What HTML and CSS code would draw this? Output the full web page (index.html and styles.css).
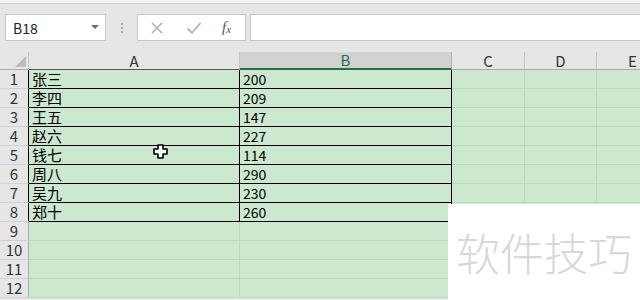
FILE: index.html
```html
<!DOCTYPE html>
<html>
<head>
<meta charset="utf-8">
<link rel="stylesheet" href="styles.css">
</head>
<body>
<div class="app">
  <div class="top"></div>
  <div class="toolbar">
    <div class="namebox"><span class="nb-text">B18</span><span class="nb-arrow"></span></div>
    <div class="sep"><i></i><i></i><i></i></div>
    <div class="fbtns">
      <svg class="ic" width="14" height="14" viewBox="0 0 14 14"><path d="M2 2 L12 12 M12 2 L2 12" stroke="#b3b3b3" stroke-width="1.6" fill="none"/></svg>
      <svg class="ic" width="16" height="14" viewBox="0 0 16 14"><path d="M1.5 7.5 L6 12 L14.5 2" stroke="#b3b3b3" stroke-width="1.8" fill="none"/></svg>
      <span class="fx">f<sub>x</sub></span>
    </div>
    <div class="finput"></div>
  </div>
  <div class="sheet">
    <div class="c corner"><span class="tri"></span></div>
    <div class="c ch cha">A</div>
    <div class="c ch chb">B</div>
    <div class="c ch">C</div>
    <div class="c ch">D</div>
    <div class="c ch">E</div>

    <div class="c rh rhb">1</div><div class="c tb ta">张三</div><div class="c tb">200</div><div class="c g"></div><div class="c g"></div><div class="c g"></div>
    <div class="c rh rhb">2</div><div class="c tb ta">李四</div><div class="c tb">209</div><div class="c g"></div><div class="c g"></div><div class="c g"></div>
    <div class="c rh rhb">3</div><div class="c tb ta">王五</div><div class="c tb">147</div><div class="c g"></div><div class="c g"></div><div class="c g"></div>
    <div class="c rh rhb">4</div><div class="c tb ta">赵六</div><div class="c tb">227</div><div class="c g"></div><div class="c g"></div><div class="c g"></div>
    <div class="c rh rhb">5</div><div class="c tb ta">钱七</div><div class="c tb">114</div><div class="c g"></div><div class="c g"></div><div class="c g"></div>
    <div class="c rh rhb">6</div><div class="c tb ta">周八</div><div class="c tb">290</div><div class="c g"></div><div class="c g"></div><div class="c g"></div>
    <div class="c rh rhb">7</div><div class="c tb ta">吴九</div><div class="c tb">230</div><div class="c g"></div><div class="c g"></div><div class="c g"></div>
    <div class="c rh rhb">8</div><div class="c tb ta">郑十</div><div class="c tb">260</div><div class="c g"></div><div class="c g"></div><div class="c g"></div>
    <div class="c rh">9</div><div class="c g"></div><div class="c g"></div><div class="c g"></div><div class="c g"></div><div class="c g"></div>
    <div class="c rh">10</div><div class="c g"></div><div class="c g"></div><div class="c g"></div><div class="c g"></div><div class="c g"></div>
    <div class="c rh">11</div><div class="c g"></div><div class="c g"></div><div class="c g"></div><div class="c g"></div><div class="c g"></div>
    <div class="c rh">12</div><div class="c g"></div><div class="c g"></div><div class="c g"></div><div class="c g"></div><div class="c g"></div>
  </div>
  <svg class="cursor" width="15" height="15" viewBox="0 0 15 15"><path d="M5 1 H10 V5 H14 V10 H10 V14 H5 V10 H1 V5 H5 Z" fill="#fff" stroke="#000" stroke-width="1.6" stroke-linejoin="round"/></svg>
  <div class="wm">软件技巧</div>
</div>
</body>
</html>
```

FILE: styles.css
```css
html, body {
  margin: 0;
  padding: 0;
}
body {
  width: 640px;
  height: 300px;
  overflow: hidden;
  background: #e6e6e6;
  font-family: "Noto Sans CJK SC", "Noto Sans", sans-serif;
}
.app {
  position: relative;
  width: 640px;
  height: 300px;
  overflow: hidden;
}
.top {
  height: 3px;
  background: #f2f2f2;
  border-bottom: 1px solid #d4d4d4;
}
.toolbar {
  height: 48px;
  box-sizing: border-box;
  padding: 10px 0 0 5px;
  display: flex;
  align-items: flex-start;
}
.namebox {
  width: 101px;
  height: 27px;
  box-sizing: border-box;
  background: #fff;
  border: 1px solid #c6c6c6;
  display: flex;
  align-items: center;
  justify-content: space-between;
  padding: 0 6px 0 7px;
}
.nb-text {
  font-size: 14px;
  color: #222;
  line-height: 1;
}
.nb-arrow {
  width: 0;
  height: 0;
  border-left: 4px solid transparent;
  border-right: 4px solid transparent;
  border-top: 4px solid #6e6e6e;
  margin-top: -2px;
}
.sep {
  width: 31px;
  height: 27px;
  display: flex;
  flex-direction: column;
  align-items: center;
  justify-content: center;
  gap: 2px;
}
.sep i {
  display: block;
  width: 2px;
  height: 2px;
  background: #a8a8a8;
}
.fbtns {
  width: 109px;
  height: 27px;
  box-sizing: border-box;
  background: #fff;
  border: 1px solid #c6c6c6;
  display: flex;
  align-items: center;
  padding-left: 12px;
  gap: 22px;
  margin-right: 4px;
}
.ic {
  display: block;
}
.fx {
  font-family: "Liberation Serif", serif;
  font-style: italic;
  font-size: 15px;
  color: #555;
  line-height: 1;
  margin-left: -2px;
}
.fx sub {
  font-size: 11px;
  vertical-align: -1px;
}
.finput {
  flex: 1;
  height: 27px;
  box-sizing: border-box;
  background: #fff;
  border: 1px solid #c6c6c6;
  border-right: none;
}
.sheet {
  display: grid;
  grid-template-columns: 29px 211px 212px 73px 72px 72px;
  grid-template-rows: 18px repeat(12, 19px);
}
.c {
  box-sizing: border-box;
  border-right: 1px solid #bcd9c0;
  border-bottom: 1px solid #bcd9c0;
  font-size: 14px;
  line-height: 18px;
  color: #000;
  white-space: nowrap;
}
.corner {
  background: #e6e6e6;
  border-right: 1px solid #c4c4c4;
  border-bottom: 1px solid #ababab;
  position: relative;
}
.tri {
  position: absolute;
  right: 2px;
  bottom: 2px;
  width: 0;
  height: 0;
  border-left: 11px solid transparent;
  border-bottom: 11px solid #bcbcbc;
}
.ch {
  background: #e6e6e6;
  border-right: 1px solid #c4c4c4;
  border-bottom: 1px solid #ababab;
  text-align: center;
  font-size: 15px;
  line-height: 17px;
  color: #333;
}
.cha {
  border-bottom-color: #5a5a5a;
}
.chb {
  background: #d2d2d2;
  color: #217346;
  border-bottom: 2px solid #217346;
  border-right-color: #ababab;
  line-height: 16px;
}
.rh {
  background: #e6e6e6;
  border-right: 1px solid #ababab;
  border-bottom: 1px solid #d2d2d2;
  text-align: center;
  font-size: 15px;
  color: #333;
}
.rhb {
  border-right-color: #000;
}
.g {
  background: #cce8cf;
}
.tb {
  background: #cce8cf;
  border-right: 1px solid #000;
  border-bottom: 1px solid #000;
  padding-left: 3px;
}
.ta {
  font-size: 15px;
}
.cursor {
  position: absolute;
  left: 153px;
  top: 144px;
}
.wm {
  position: absolute;
  left: 448px;
  top: 204px;
  width: 192px;
  height: 96px;
  box-sizing: border-box;
  background: #fff;
  padding: 26px 0 0 8px;
  font-size: 44px;
  line-height: 44px;
  color: #d8d8d8;
  font-weight: 300;
  white-space: nowrap;
}
```
